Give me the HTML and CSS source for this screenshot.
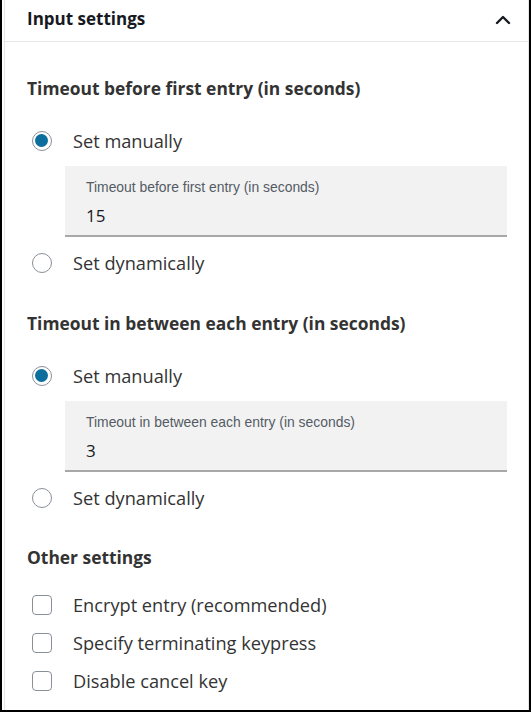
FILE: index.html
```html
<!DOCTYPE html>
<html>
<head>
<meta charset="utf-8">
<link rel="stylesheet" href="styles.css">
</head>
<body>
<div class="frame">
  <div class="panel">
    <div class="header">
      <span class="header-title">Input settings</span>
      <svg class="chevron" width="16" height="16" viewBox="0 0 16 16"><polyline points="2,11 8,5 14,11" fill="none" stroke="#16191f" stroke-width="2.4" stroke-linecap="round" stroke-linejoin="round"/></svg>
    </div>
    <div class="content">
      <div class="heading h-first">Timeout before first entry (in seconds)</div>
      <div class="row row-after-heading"><span class="radio checked"></span><span class="label">Set manually</span></div>
      <div class="field">
        <div class="field-label">Timeout before first entry (in seconds)</div>
        <div class="field-value">15</div>
      </div>
      <div class="row row-after-field"><span class="radio"></span><span class="label">Set dynamically</span></div>

      <div class="heading h-next">Timeout in between each entry (in seconds)</div>
      <div class="row row-after-heading"><span class="radio checked"></span><span class="label">Set manually</span></div>
      <div class="field">
        <div class="field-label">Timeout in between each entry (in seconds)</div>
        <div class="field-value">3</div>
      </div>
      <div class="row row-after-field"><span class="radio"></span><span class="label">Set dynamically</span></div>

      <div class="heading h-other">Other settings</div>
      <div class="checks">
        <div class="row"><span class="checkbox"></span><span class="label">Encrypt entry (recommended)</span></div>
        <div class="row"><span class="checkbox"></span><span class="label">Specify terminating keypress</span></div>
        <div class="row"><span class="checkbox"></span><span class="label">Disable cancel key</span></div>
      </div>
    </div>
  </div>
</div>
</body>
</html>
```
FILE: styles.css
```css
* { box-sizing: border-box; }
html, body { margin: 0; padding: 0; background: #fff; }
body { font-family: "Open Sans", "Noto Sans", sans-serif; color: #333; }
.frame {
  width: 531px;
  height: 712px;
  border-left: 2px solid #000;
  border-right: 2px solid #000;
  border-bottom: 2px solid #000;
  padding-left: 2px;
  overflow: hidden;
}
.panel {
  height: 100%;
  border-left: 1px solid #e6e6e6;
  border-right: 1px solid #e6e6e6;
}
.header {
  height: 42px;
  border-bottom: 1px solid #e6e6e6;
  display: flex;
  align-items: center;
  justify-content: space-between;
  padding: 0 17px 3px 22px;
}
.header-title {
  font-size: 17px;
  font-weight: 700;
  color: #16191f;
  line-height: 24px;
}
.chevron { display: block; margin-top: 1px; }
.content { padding-left: 22px; padding-right: 21px; }
.heading {
  font-size: 17.4px;
  font-weight: 700;
  line-height: 24px;
  color: #333;
}
.h-first { margin-top: 34px; }
.h-next { margin-top: 36px; }
.h-other { margin-top: 35px; }
.row {
  display: flex;
  align-items: center;
  height: 24px;
  padding-left: 5px;
}
.row-after-heading { margin-top: 29px; margin-bottom: 13px; }
.row-after-field { margin-top: 14px; }
.label {
  font-size: 18.2px;
  line-height: 24px;
  color: #333;
  margin-left: 21px;
}
.radio {
  width: 20px;
  height: 20px;
  border-radius: 50%;
  border: 1.5px solid #8a9098;
  flex: none;
  position: relative;
  background: #fff;
}
.radio.checked::after {
  content: "";
  position: absolute;
  left: 2px; top: 2px;
  width: 13px; height: 13px;
  border-radius: 50%;
  background: #0b6e9c;
}
.checkbox {
  width: 20px;
  height: 20px;
  border-radius: 4px;
  border: 1.5px solid #8a9098;
  flex: none;
}
.checks { margin-top: 24px; display: flex; flex-direction: column; gap: 14px; }
.field {
  margin-left: 38px;
  height: 71px;
  background: #f2f2f2;
  border-bottom: 2px solid #a8a8a8;
  padding: 12px 21px 0;
}
.field-label {
  font-family: "Liberation Sans", Arial, sans-serif;
  font-size: 13.9px;
  line-height: 18px;
  color: #545b64;
}
.field-value {
  margin-top: 9px;
  font-size: 17px;
  line-height: 22px;
  color: #16191f;
}
```
